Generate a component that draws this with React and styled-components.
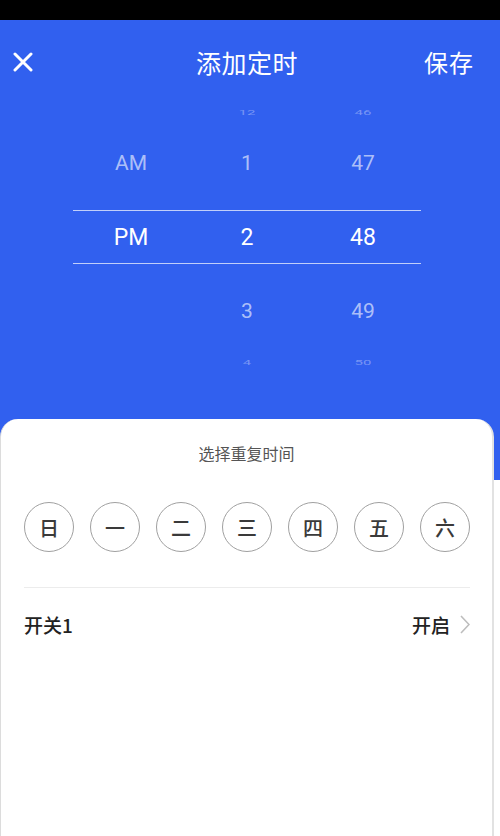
import React, { useState } from 'react';
import styled, { createGlobalStyle, css } from 'styled-components';

const blue = '#3160ef';

const GlobalStyle = createGlobalStyle`
  html, body {
    margin: 0;
    padding: 0;
    background: #ffffff;
  }

  body {
    font-family: Roboto, "Noto Sans CJK SC", "Noto Sans", sans-serif;
  }

  * {
    box-sizing: border-box;
  }
`;

const Screen = styled.div`
  width: 500px;
  height: 836px;
  overflow: hidden;
  display: flex;
  flex-direction: column;
`;

const StatusBar = styled.div`
  height: 20px;
  background: #000;
  flex-shrink: 0;
`;

const Hero = styled.section`
  height: 460px;
  background: ${blue};
  flex-shrink: 0;
`;

const TopBar = styled.header`
  height: 68px;
  padding: 16px 26px 0 13px;
  display: grid;
  grid-template-columns: 1fr auto 1fr;
  align-items: center;
  color: #fff;
`;

const IconButton = styled.button`
  width: 20px;
  height: 20px;
  padding: 0;
  border: 0;
  background: none;
  display: flex;
`;

const Title = styled.h1`
  margin: 0;
  padding-left: 7px;
  font-family: "Noto Sans CJK SC", sans-serif;
  font-size: 25px;
  font-weight: 400;
  line-height: 30px;
  letter-spacing: 0.5px;
`;

const SaveButton = styled.button`
  justify-self: end;
  padding: 0;
  border: 0;
  background: none;
  color: #fff;
  font-family: "Noto Sans CJK SC", sans-serif;
  font-size: 24px;
  line-height: 30px;
  letter-spacing: 1px;
`;

const Picker = styled.div`
  margin-left: 73px;
  width: 348px;
  display: flex;
  flex-direction: column;
`;

const rowTones = {
  far: css`
    font-size: 15px;
    color: rgba(255, 255, 255, 0.35);
    transform: scaleY(0.45);
  `,
  near: css`
    font-size: 21px;
    color: rgba(255, 255, 255, 0.62);
  `,
  selected: css`
    font-size: 23px;
    color: #fff;
  `,
};

const Row = styled.div`
  height: ${(p) => p.$height}px;
  padding-top: ${(p) => p.$padTop || 0}px;
  padding-bottom: ${(p) => p.$padBottom || 0}px;
  display: grid;
  grid-template-columns: repeat(3, 116px);
  align-items: center;
  ${(p) => p.$tone === 'selected' && css`
    border-top: 1.5px solid rgba(255, 255, 255, 0.7);
    border-bottom: 1.5px solid rgba(255, 255, 255, 0.7);
  `}
`;

const Cell = styled.span`
  text-align: center;
  line-height: 1;
  ${(p) => rowTones[p.$tone]}
`;

const Card = styled.main`
  flex: 1;
  margin-top: -61px;
  position: relative;
  background: #fff;
  width: 494px;
  border-radius: 18px 18px 0 0;
  border-left: 1px solid #dcdcdc;
  border-right: 2px solid #e2e2e2;
  padding-top: 22px;
  display: flex;
  flex-direction: column;
`;

const Subtitle = styled.h2`
  margin: 0;
  text-align: center;
  font-family: "Noto Sans CJK SC", sans-serif;
  font-size: 16px;
  font-weight: 400;
  line-height: 24px;
  color: #555;
`;

const Days = styled.div`
  margin-top: 37px;
  padding: 0 22px 0 23px;
  display: flex;
  justify-content: space-between;
`;

const Day = styled.button`
  width: 50px;
  height: 50px;
  padding: 0;
  border-radius: 50%;
  border: 1.5px solid ${(p) => (p.$active ? blue : '#a0a0a0')};
  background: ${(p) => (p.$active ? blue : '#fff')};
  color: ${(p) => (p.$active ? '#fff' : '#3a3a3a')};
  font-family: "Noto Sans CJK SC", sans-serif;
  font-size: 20px;
  font-weight: 500;
  display: flex;
  align-items: center;
  justify-content: center;
`;

const Divider = styled.hr`
  margin: 35px 22px 0 23px;
  border: 0;
  border-top: 1px solid #ececec;
`;

const SettingRow = styled.div`
  height: 72px;
  padding: 0 22px 0 23px;
  display: flex;
  align-items: center;
  justify-content: space-between;
  font-family: "Noto Sans CJK SC", sans-serif;
  font-size: 19px;
  font-weight: 500;
  color: #222;
`;

const SettingValue = styled.div`
  display: flex;
  align-items: center;
  gap: 10px;
`;

const CloseIcon = () => (
  <svg width="20" height="20" viewBox="0 0 20 20">
    <path d="M2 2 L18 18 M18 2 L2 18" stroke="#fff" strokeWidth="3" strokeLinecap="round" />
  </svg>
);

const Chevron = () => (
  <svg width="10" height="19" viewBox="0 0 10 19">
    <polyline points="1,1 9,9.5 1,18" fill="none" stroke="#bdbdbd" strokeWidth="1.6" />
  </svg>
);

const rows = [
  { tone: 'far', height: 48, cells: ['', '12', '46'] },
  { tone: 'near', height: 74, padBottom: 20, cells: ['AM', '1', '47'] },
  { tone: 'selected', height: 54, cells: ['PM', '2', '48'] },
  { tone: 'near', height: 74, padTop: 20, cells: ['', '3', '49'] },
  { tone: 'far', height: 48, cells: ['', '4', '50'] },
];

const weekdays = ['日', '一', '二', '三', '四', '五', '六'];

const App = () => {
  const [selectedDays, setSelectedDays] = useState([]);

  const toggleDay = (index) => {
    setSelectedDays((days) => (days.includes(index) ? days.filter((d) => d !== index) : [...days, index]));
  };

  return (
    <Screen>
      <GlobalStyle />
      <StatusBar />
      <Hero>
        <TopBar>
          <IconButton aria-label="close"><CloseIcon /></IconButton>
          <Title>添加定时</Title>
          <SaveButton>保存</SaveButton>
        </TopBar>
        <Picker>
          {rows.map((row, i) => (
            <Row key={i} $tone={row.tone} $height={row.height} $padTop={row.padTop} $padBottom={row.padBottom}>
              {row.cells.map((cell, j) => (
                <Cell key={j} $tone={row.tone}>{cell}</Cell>
              ))}
            </Row>
          ))}
        </Picker>
      </Hero>
      <Card>
        <Subtitle>选择重复时间</Subtitle>
        <Days>
          {weekdays.map((day, i) => (
            <Day key={day} $active={selectedDays.includes(i)} onClick={() => toggleDay(i)}>{day}</Day>
          ))}
        </Days>
        <Divider />
        <SettingRow>
          <span>开关1</span>
          <SettingValue>
            开启
            <Chevron />
          </SettingValue>
        </SettingRow>
      </Card>
    </Screen>
  );
};

export default App;
